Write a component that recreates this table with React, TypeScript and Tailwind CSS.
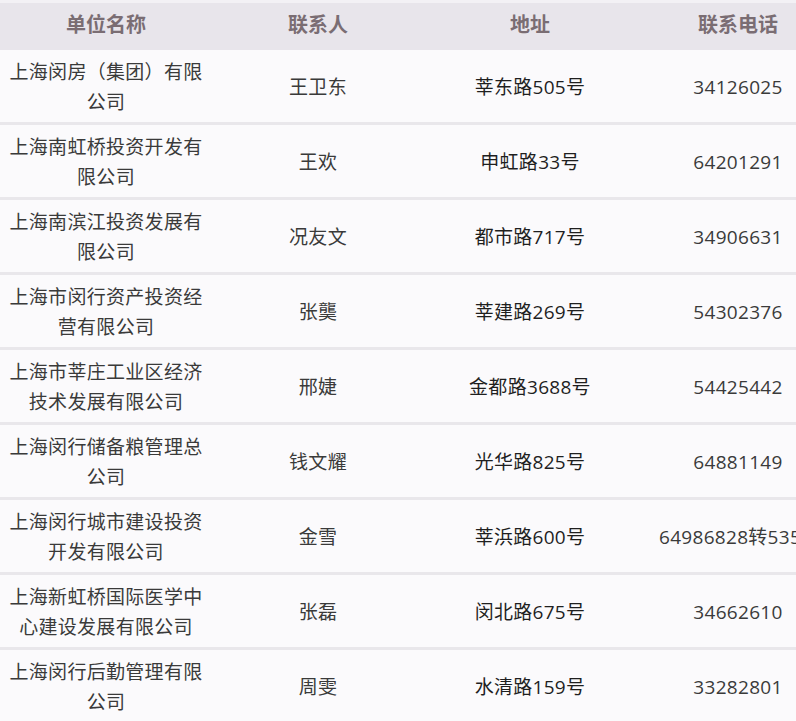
const ROWS = [
  { name: "上海闵房（集团）有限公司", person: "王卫东", addr: "莘东路505号", tel: "34126025" },
  { name: "上海南虹桥投资开发有限公司", person: "王欢", addr: "申虹路33号", tel: "64201291" },
  { name: "上海南滨江投资发展有限公司", person: "况友文", addr: "都市路717号", tel: "34906631" },
  { name: "上海市闵行资产投资经营有限公司", person: "张龑", addr: "莘建路269号", tel: "54302376" },
  { name: "上海市莘庄工业区经济技术发展有限公司", person: "邢婕", addr: "金都路3688号", tel: "54425442" },
  { name: "上海闵行储备粮管理总公司", person: "钱文耀", addr: "光华路825号", tel: "64881149" },
  { name: "上海闵行城市建设投资开发有限公司", person: "金雪", addr: "莘浜路600号", tel: "64986828转535" },
  { name: "上海新虹桥国际医学中心建设发展有限公司", person: "张磊", addr: "闵北路675号", tel: "34662610" },
  { name: "上海闵行后勤管理有限公司", person: "周雯", addr: "水清路159号", tel: "33282801" },
];

const COLS = "grid grid-cols-[212px_212px_212px_204px] w-[840px]";

export default function App() {
  return (
    <div
      className="w-[796px] h-[721px] overflow-hidden bg-[#f3f1f5] pt-[3px]"
      style={{ fontFamily: '"Open Sans", "Noto Sans CJK SC", sans-serif' }}
    >
      <div className={`${COLS} h-[47px] items-center bg-[#e8e5eb] pb-[3px] text-[20px] font-bold text-[#7a6d73]`}>
        <div className="px-[9px] text-center">单位名称</div>
        <div className="px-[9px] text-center">联系人</div>
        <div className="px-[9px] text-center">地址</div>
        <div className="px-[23px] text-center">联系电话</div>
      </div>
      {ROWS.map((r) => (
        <div
          key={r.name}
          className={`${COLS} h-[75px] items-center border-b-[3px] border-[#e9e7eb] bg-[#fbfafc] pt-[2px] text-[19px] leading-[30px] tracking-[0.3px]`}
        >
          <div className="px-[9px] text-center text-[#3a3a3a]">{r.name}</div>
          <div className="px-[9px] text-center text-[#3a3a3a]">{r.person}</div>
          <div className="px-[9px] text-center text-[#1f1f1f]">{r.addr}</div>
          <div
            className={`whitespace-nowrap px-[23px] text-[#3a3a3a] ${
              r.tel.length > 10 ? "text-left" : "text-center"
            }`}
          >
            {r.tel}
          </div>
        </div>
      ))}
    </div>
  );
}
